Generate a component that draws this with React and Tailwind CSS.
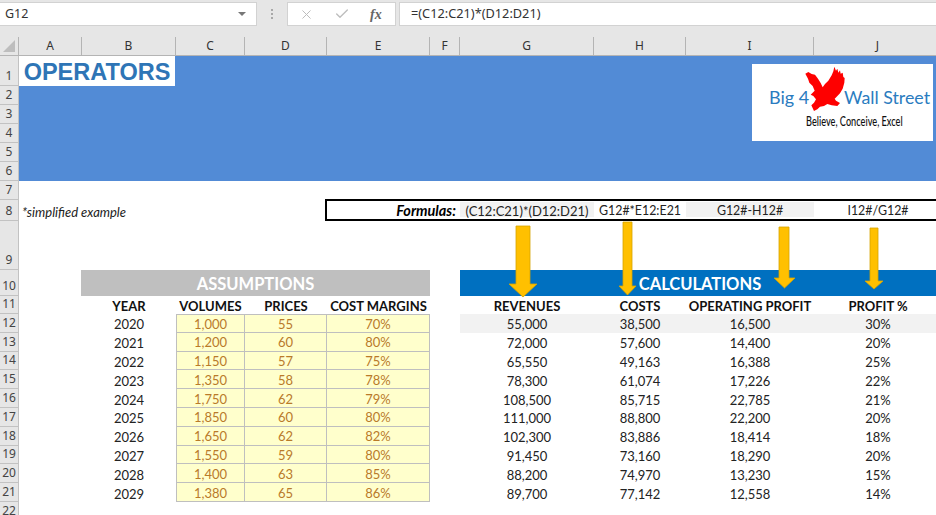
import React from "react";
import { X, Check } from "lucide-react";

const columns = ["A", "B", "C", "D", "E", "F", "G", "H", "I", "J"];

const data = [
  ["2020", "1,000", "55", "70%", "55,000", "38,500", "16,500", "30%"],
  ["2021", "1,200", "60", "80%", "72,000", "57,600", "14,400", "20%"],
  ["2022", "1,150", "57", "75%", "65,550", "49,163", "16,388", "25%"],
  ["2023", "1,350", "58", "78%", "78,300", "61,074", "17,226", "22%"],
  ["2024", "1,750", "62", "79%", "108,500", "85,715", "22,785", "21%"],
  ["2025", "1,850", "60", "80%", "111,000", "88,800", "22,200", "20%"],
  ["2026", "1,650", "62", "82%", "102,300", "83,886", "18,414", "18%"],
  ["2027", "1,550", "59", "80%", "91,450", "73,160", "18,290", "20%"],
  ["2028", "1,400", "63", "85%", "88,200", "74,970", "13,230", "15%"],
  ["2029", "1,380", "65", "86%", "89,700", "77,142", "12,558", "14%"],
];

const RowHead = ({ n }) => (
  <div className="col-start-1 flex items-end justify-center overflow-hidden border-r border-b border-[#c2c2c2] bg-[#e6e6e6] font-['Noto_Sans'] text-[12px] leading-[18px] text-[#444]">
    {n}
  </div>
);

const ColHead = ({ label }) => (
  <div className="flex items-center justify-center border-r border-b border-[#b4b4b4] bg-[#e6e6e6] font-['Noto_Sans'] text-[12px] text-[#333]">
    {label}
  </div>
);

const Head = ({ children, className = "" }) => (
  <div className={`flex items-center justify-center whitespace-nowrap pt-[2px] text-[13px] leading-[16px] font-bold text-[#111] ${className}`}>
    {children}
  </div>
);

const Cell = ({ children, className = "" }) => (
  <div className={`flex items-center justify-center pt-[2px] text-[13px] leading-[16px] text-[#222] ${className}`}>
    {children}
  </div>
);

const Input = ({ children, className = "" }) => (
  <div className={`flex items-center justify-center border-r border-b border-[#bfbfbf] bg-[#ffffcc] pt-[2px] text-[13px] leading-[15px] text-[#b97a2a] ${className}`}>
    {children}
  </div>
);

const Arrow = ({ x1, x2, top, neck, hx1, hx2, tip }) => (
  <polygon
    points={`${x1},${top} ${x2},${top} ${x2},${neck} ${hx2},${neck} ${(hx1 + hx2) / 2},${tip} ${hx1},${neck} ${x1},${neck}`}
    fill="#ffc000"
    stroke="#d6a300"
    strokeWidth="0.8"
  />
);

const Logo = () => (
  <div className="absolute top-[64px] left-[752px] h-[77px] w-[181px] bg-white pt-[21px] pl-[17px]">
    <div className="flex h-[24px] items-center whitespace-nowrap text-[18px] text-[#2a7cc0]">
      <span className="w-[75px]">Big 4</span>
      <span className="text-[17.8px]">Wall Street</span>
    </div>
    <div className="mt-[2px] ml-[37px] w-[130px] origin-left scale-x-[0.68] whitespace-nowrap text-[13.5px] font-medium text-[#111]">
      Believe, Conceive, Excel
    </div>
    <svg className="absolute top-[-2px] left-[48px]" width="60" height="56" viewBox="0 0 180 168">
      <polygon
        fill="#fe0000"
        points="16,35 25,30 35,36 45,38 54,50 62,63 68,76 75,66 85,56 95,40 100,28 103,14 108,26 112,20 115,32 120,25 122,35 128,32 130,45 134,48 133,62 128,80 120,94 110,104 104,110 108,116 120,123 112,132 95,130 82,126 72,132 60,134 52,142 42,147 34,130 42,122 48,112 40,102 32,98 44,86 38,72 28,62 24,50"
      />
    </svg>
  </div>
);

export default function App() {
  return (
    <div className="relative h-[515px] w-[936px] overflow-hidden bg-white font-['Lato',sans-serif]">
      {/* formula bar */}
      <div className="flex h-[37px] items-start bg-[#e6e6e6] pt-[2px]">
        <div className="flex h-[24px] w-[257px] items-center justify-between border-y border-r border-[#d2d2d2] bg-white pr-[10px] pl-[5px] font-['Noto_Sans'] text-[12.5px] text-[#333]">
          <span>G12</span>
          <span className="h-0 w-0 border-x-[4px] border-t-[4px] border-x-transparent border-t-[#777]" />
        </div>
        <div className="flex h-[24px] w-[30px] flex-col items-center justify-center gap-[2px]">
          <span className="h-[2px] w-[2px] bg-[#a8a8a8]" />
          <span className="h-[2px] w-[2px] bg-[#a8a8a8]" />
          <span className="h-[2px] w-[2px] bg-[#a8a8a8]" />
        </div>
        <div className="flex h-[24px] w-[109px] items-center border border-[#d2d2d2] bg-white pl-[11px]">
          <X size={15} strokeWidth={1.6} className="text-[#bdbdbd]" />
          <Check size={16} strokeWidth={2} className="ml-[20px] text-[#bdbdbd]" />
          <span className="ml-[20px] font-['Liberation_Serif'] text-[14px] font-bold text-[#666] italic">fx</span>
        </div>
        <div className="ml-[3px] flex h-[24px] flex-1 items-center border-y border-l border-[#d2d2d2] bg-white pl-[11px] font-['Noto_Sans'] text-[12.75px] text-[#333]">
          =(C12:C21)*(D12:D21)
        </div>
      </div>

      {/* sheet */}
      <div className="grid w-[942px] grid-cols-[19px_63px_94px_69px_82px_103px_30px_134px_92px_128px_128px] grid-rows-[19px_30px_repeat(6,19px)_21px_49px_26px_18px_repeat(10,18.8px)_19px]">
        <div className="relative border-r border-b border-[#b4b4b4] bg-[#e6e6e6]">
          <div className="absolute right-[3px] bottom-[3px] h-0 w-0 border-b-[12px] border-l-[12px] border-b-[#bdbdbd] border-l-transparent" />
        </div>
        {columns.map((c) => (
          <ColHead key={c} label={c} />
        ))}

        <div className="col-[2/12] row-[2/8] bg-[#528bd6]">
          <div className="flex h-[30px] w-[156px] items-center justify-center bg-white pt-[3px] font-['Liberation_Sans'] text-[23.5px] font-bold text-[#2e75b6]">
            OPERATORS
          </div>
        </div>
        {[1, 2, 3, 4, 5, 6, 7].map((n) => (
          <RowHead key={n} n={n} />
        ))}

        <RowHead n={8} />
        <div className="col-span-4 col-start-2 flex items-center pt-[2px] pl-[3px] text-[13px] leading-[16px] whitespace-nowrap text-[#222] italic">
          *simplified example
        </div>
        <div className="col-[6/12] -mt-px -ml-[2px] grid h-[22px] grid-cols-[133px_134px_92px_128px_128px] grid-rows-[18px] border-y-2 border-l-2 border-black text-[12.4px] leading-[12px] text-[#222]">
          <div className="flex items-center justify-end pt-[2px] pr-[4px] text-[14.5px] font-bold text-black italic">Formulas:</div>
          <div className="mt-px mb-[2px] flex items-center justify-center whitespace-nowrap bg-[#f2f2f2] pt-[2px] text-[13px]">(C12:C21)*(D12:D21)</div>
          <div className="flex items-center justify-center whitespace-nowrap pt-[2px]">G12#*E12:E21</div>
          <div className="mt-px mb-[2px] flex items-center justify-center bg-[#f2f2f2] pt-[2px]">G12#-H12#</div>
          <div className="flex items-center justify-center pt-[2px]">I12#/G12#</div>
        </div>

        <RowHead n={9} />

        <RowHead n={10} />
        <div className="col-span-4 col-start-3 -ml-px flex items-center justify-center bg-[#bfbfbf] pt-[2px] text-[16.5px] leading-[20px] font-bold text-white">
          ASSUMPTIONS
        </div>
        <div className="col-span-4 col-start-8 flex items-center justify-center bg-[#0070c0] pt-[2px] pr-[2px] text-[16.5px] leading-[20px] font-bold text-white">
          CALCULATIONS
        </div>

        <RowHead n={11} />
        <Head className="col-start-3">YEAR</Head>
        <Head>VOLUMES</Head>
        <Head>PRICES</Head>
        <Head>COST MARGINS</Head>
        <Head className="col-start-8">REVENUES</Head>
        <Head>COSTS</Head>
        <Head>OPERATING PROFIT</Head>
        <Head>PROFIT %</Head>

        {data.map((row, i) => {
          const shade = i === 0 ? "bg-[#f2f2f2]" : "";
          const top = i === 0 ? "border-t" : "";
          return (
            <React.Fragment key={row[0]}>
              <RowHead n={i + 12} />
              <Cell className="col-start-3">{row[0]}</Cell>
              <Input className={`border-l ${top}`}>{row[1]}</Input>
              <Input className={top}>{row[2]}</Input>
              <Input className={top}>{row[3]}</Input>
              <Cell className={`col-start-8 ${shade}`}>{row[4]}</Cell>
              <Cell className={shade}>{row[5]}</Cell>
              <Cell className={shade}>{row[6]}</Cell>
              <Cell className={shade}>{row[7]}</Cell>
            </React.Fragment>
          );
        })}

        <RowHead n={22} />
      </div>

      {/* shapes floating over the sheet */}
      <svg className="pointer-events-none absolute top-0 left-0" width="936" height="515">
        <Arrow x1={516} x2={530} top={226} neck={284} hx1={509} hx2={537} tip={297} />
        <Arrow x1={623} x2={632} top={222} neck={286} hx1={619} hx2={636} tip={295} />
        <Arrow x1={779} x2={789} top={227} neck={278} hx1={774} hx2={795} tip={288} />
        <Arrow x1={870} x2={878} top={228} neck={281} hx1={865} hx2={883} tip={289} />
      </svg>
      <Logo />
    </div>
  );
}
